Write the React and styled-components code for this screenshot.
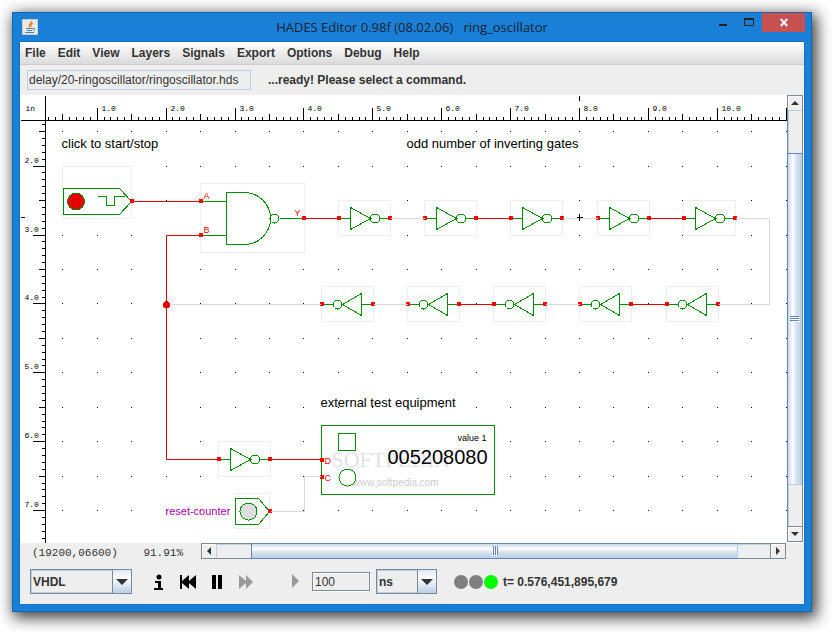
import React, { useState } from "react";
import styled, { createGlobalStyle } from "styled-components";

const GlobalStyle = createGlobalStyle`
  * {
    box-sizing: border-box;
  }
  body {
    margin: 0;
    background: #fff;
    color: #333;
    font-family: "Liberation Sans", Arial, sans-serif;
    font-size: 12px;
  }
`;

const Desktop = styled.div`
  display: flex;
  min-height: 100vh;
  padding: 12px 20px 20px 12px;
`;

const Window = styled.div`
  flex: 1;
  min-width: 0;
  display: flex;
  flex-direction: column;
  padding: 0 7px 7px;
  border: 1px solid #1465ad;
  background: #1a80d7;
  box-shadow: 3px 4px 14px 2px rgba(0, 0, 0, 0.75);
`;

const TitleBar = styled.header`
  display: grid;
  grid-template-columns: 84px 1fr 84px;
  height: 29px;
`;

const AppIcon = styled.svg`
  width: 16px;
  height: 16px;
  margin: 6px 2px;
`;

const Title = styled.h1`
  margin: 0;
  color: #16222e;
  font-family: "Open Sans", "Noto Sans", sans-serif;
  font-size: 13px;
  font-weight: 400;
  line-height: 29px;
  text-align: center;
  white-space: pre;
`;

const WindowButtons = styled.div`
  display: flex;
  justify-content: flex-end;
  height: 19px;
  margin-right: -1px;
`;

const WindowButton = styled.button`
  width: ${(props) => (props.$close ? "43px" : "26px")};
  height: 19px;
  flex-shrink: 0;
  padding: 0;
  border: none;
  background: ${(props) => (props.$close ? "#c75050" : "transparent")};
  svg {
    display: block;
    margin: 0 auto;
  }
`;

const Client = styled.div`
  flex: 1;
  display: flex;
  flex-direction: column;
  background: #eee;
  box-shadow: 0 0 0 1px #1570c0;
`;

const MenuBar = styled.nav`
  display: flex;
  gap: 12px;
  height: 23px;
  padding: 0 5px;
  border-bottom: 1px solid #ccc;
  background: linear-gradient(#fff, #dadada);
`;

const MenuItem = styled.button`
  padding: 0;
  border: none;
  background: none;
  color: #333;
  font: bold 12px/22px "Liberation Sans", Arial, sans-serif;
`;

const CommandBar = styled.div`
  display: flex;
  align-items: center;
  gap: 17px;
  height: 30px;
  padding: 0 7px;
`;

const PathField = styled.input`
  width: 224px;
  height: 20px;
  padding: 0 1px;
  border: 1px solid #b8cfe5;
  background: #eee;
  color: #333;
  font: 12px "Liberation Sans", Arial, sans-serif;
`;

const Message = styled.span`
  font-weight: bold;
`;

const WorkArea = styled.div`
  flex: 1;
  display: flex;
  background: #fff;
`;

const Sheet = styled.svg`
  flex: 1;
  min-width: 0;
  min-height: 448px;
  background: #fff;
  font-family: "Liberation Sans", Arial, sans-serif;
`;

const ScrollBar = styled.div`
  display: flex;
  flex-direction: ${(props) => (props.$vertical ? "column" : "row")};
  ${(props) => (props.$vertical ? "width: 16px; margin: 0 1px 1px 0;" : "flex: 1; height: 16px; margin-right: 18px;")}
  border: 1px solid #7a8a99;
  background: #eee;
`;

const ScrollArrow = styled.button`
  display: grid;
  place-items: center;
  width: 14px;
  height: 14px;
  padding: 0;
  border: none;
  background: #eee;
  box-shadow: inset 1px 1px #fff, 0 0 0 1px #7a8a99;
`;

const Track = styled.div`
  flex: ${(props) => props.$size};
  box-shadow: inset 1px 1px #b8cfe5;
`;

const Thumb = styled.div`
  flex: ${(props) => props.$size};
  display: grid;
  place-items: center;
  box-shadow: 0 0 0 1px #6382bf;
  background: linear-gradient(
    ${(props) => (props.$vertical ? "to right" : "to bottom")},
    #c8d9ea,
    #e6eef6 20%,
    #fff 32%,
    #dbe6f1 55%,
    #b8cfe5
  );
`;

const StatusRow = styled.div`
  display: flex;
  height: 16px;
`;

const Coordinates = styled.div`
  display: flex;
  justify-content: space-between;
  width: 181px;
  padding: 3px 18px 0 12px;
  font: 11px/14px "Liberation Mono", monospace;
  white-space: nowrap;
`;

const ControlBar = styled.div`
  display: flex;
  align-items: center;
  height: 45px;
  padding: 0 10px;
`;

const SelectBox = styled.div`
  position: relative;
  width: ${(props) => props.$width}px;
  height: 25px;
  border: 1px solid #7a8a99;
  background: #eee;
`;

const Select = styled.select`
  appearance: none;
  width: 100%;
  height: 100%;
  padding: 0 20px 0 1px;
  border: 1px solid #b8cfe5;
  border-radius: 0;
  background: transparent;
  color: #333;
  font: bold 12px "Liberation Sans", Arial, sans-serif;
`;

const SelectArrow = styled.span`
  position: absolute;
  top: 0;
  right: 0;
  display: grid;
  place-items: center;
  width: 19px;
  height: 23px;
  border-left: 1px solid #7a8a99;
  background: linear-gradient(#dde8f3, #fff 35%, #b8cfe5);
  pointer-events: none;
`;

const PlayerButtons = styled.div`
  display: flex;
  align-items: center;
  gap: 12px;
  margin: 0 8px 0 19px;
`;

const PlayerButton = styled.button`
  width: 17px;
  height: 18px;
  padding: 0;
  border: none;
  background: none;
  &:last-child {
    margin-left: 20px;
  }
  svg {
    display: block;
  }
`;

const StepField = styled.input`
  width: 58px;
  height: 19px;
  margin-right: 6px;
  padding: 0 2px;
  border: 1px solid #7a8a99;
  background: #eee;
  box-shadow: 1px 1px #fff, inset 1px 1px #fff;
  color: #333;
  font: 12px "Liberation Sans", Arial, sans-serif;
`;

const Lamps = styled.div`
  display: flex;
  gap: 1px;
  margin: 0 5px 0 17px;
`;

const Lamp = styled.span`
  width: 14px;
  height: 14px;
  border-radius: 50%;
  background: ${(props) => (props.$on ? "#0f0" : "#808080")};
`;

const GREEN = "#008c00";
const RED = "#e60000";
const GRAY = "#d9d9d9";

const MENUS = ["File", "Edit", "View", "Layers", "Signals", "Export", "Options", "Debug", "Help"];

// sheet position of the upper left corner of the view
const ORIGIN = { x: 20, y: 95 };

function toPixel(tenths) {
  return Math.floor(28.3 + tenths * 6.89);
}

function range(from, to) {
  return Array.from({ length: to - from }, (_, i) => from + i);
}

function tickLength(tenths) {
  if (tenths % 10 === 0) return 13;
  return tenths % 5 === 0 ? 7 : 4;
}

function Arrow({ direction, size = 8 }) {
  const shapes = {
    up: "M0 6 L4 2 L8 6 Z",
    down: "M0 2 L8 2 L4 6 Z",
    left: "M6 0 L6 8 L2 4 Z",
    right: "M2 0 L6 4 L2 8 Z",
  };
  return (
    <svg width={size} height={size} viewBox="0 0 8 8" aria-hidden="true">
      <path d={shapes[direction]} fill="#333" />
    </svg>
  );
}

function Grip({ vertical }) {
  return (
    <svg width="10" height="10" aria-hidden="true" shapeRendering="crispEdges">
      <g transform={vertical ? undefined : "rotate(90 5 5)"}>
        <path d="M1 3.5h9M1 5.5h9M1 7.5h9" stroke="#fff" />
        <path d="M0 2.5h9M0 4.5h9M0 6.5h9" stroke="#6382bf" />
      </g>
    </svg>
  );
}

function Rulers() {
  const ticks = range(3, 200);
  return (
    <>
      <path d="M20 120 H2000 M45 95 V2000 M579 95 V100 M20 217 H24" stroke="#000" />
      <path
        stroke="#000"
        d={ticks.map((t) => `M${toPixel(t)} 120 v-${tickLength(t)}`).join(" ")}
      />
      <path
        stroke="#000"
        d={ticks
          .filter((t) => t > 13)
          .map((t) => `M45 ${toPixel(t)} h-${tickLength(t)}`)
          .join(" ")}
      />
      <g fontFamily="Liberation Mono, monospace" fontSize="8" fill="#000">
        <text x="25" y="110">in</text>
        {range(1, 11).map((n) => (
          <text key={n} x={toPixel(n * 10) + 4} y="110">{n}.0</text>
        ))}
        {range(2, 8).map((n) => (
          <text key={n} x="24" y={toPixel(n * 10) - 4}>{n}.0</text>
        ))}
      </g>
    </>
  );
}

function GridDots() {
  const d = range(1, 40)
    .flatMap((col) => range(3, 40).map((row) => `M${toPixel(col * 5) - 0.5} ${toPixel(row * 5)}h1`))
    .join("");
  return <path d={d} stroke="#000" />;
}

function Pin({ x, y }) {
  return <rect x={x - 1.5} y={y - 2.5} width="4" height="4" fill="#f00" stroke="none" />;
}

function Bounds({ x, y, w, h }) {
  return <rect x={x} y={y} width={w} height={h} fill="#fff" stroke="#eee" />;
}

function Inverter({ x, y }) {
  return (
    <g fill="none" stroke={GREEN}>
      <Bounds x={x} y={y - 18} w={52} h={35} />
      <path d={`M${x} ${y} h12 M${x + 12} ${y - 12} v23 M${x + 12} ${y - 11} L${x + 32} ${y} L${x + 12} ${y + 11} M${x + 41} ${y} h10`} />
      <circle cx={x + 36.5} cy={y} r="4.5" />
      <Pin x={x} y={y} />
      <Pin x={x + 51} y={y} />
    </g>
  );
}

function InverterLeft({ x, y }) {
  return (
    <g fill="none" stroke={GREEN}>
      <Bounds x={x} y={y - 18} w={52} h={35} />
      <path d={`M${x} ${y} h12 M${x + 40} ${y - 12} v23 M${x + 40} ${y - 11} L${x + 21} ${y} L${x + 40} ${y + 11} M${x + 40} ${y} h11`} />
      <circle cx={x + 16} cy={y} r="4.5" />
      <Pin x={x} y={y} />
      <Pin x={x + 51} y={y} />
    </g>
  );
}

function NandGate() {
  return (
    <g fill="none" stroke={GREEN}>
      <Bounds x={200} y={183} w={104} h={69} />
      <path d="M200 201 H226 M200 235 H226 M226 192 V244 H244 A26 26 0 0 0 244 192 Z M279 218 H304" />
      <circle cx="274" cy="218" r="4.5" />
      <Pin x={200} y={201} />
      <Pin x={200} y={235} />
      <Pin x={303} y={218} />
      <g fill="#f00" stroke="none" fontSize="9">
        <text x="203" y="198">A</text>
        <text x="203" y="232">B</text>
        <text x="294" y="215">Y</text>
      </g>
    </g>
  );
}

function PulseSwitch() {
  return (
    <g fill="none" stroke={GREEN}>
      <Bounds x={62} y={166} w={69} h={52} />
      <path d="M119 188 H63 V214 H119 L131 201 Z M97 196 H106 V205 H114 V196 H124" />
      <circle cx="75.5" cy="201" r="8.5" fill={RED} />
      <Pin x={131} y={201} />
    </g>
  );
}

function ResetSwitch() {
  return (
    <g fill="none" stroke={GREEN}>
      <Bounds x={235} y={493} w={34} h={35} />
      <path d="M258 498 H235 V524 H258 L269 511 Z" />
      <circle cx="248" cy="511" r="8.5" fill="#ddd" />
      <Pin x={269} y={511} />
    </g>
  );
}

function Counter() {
  return (
    <g fill="none" stroke={GREEN}>
      <rect x="321" y="425" width="173" height="69" fill="#fff" />
      <g stroke="none">
        <text x="331" y="466" fontFamily="Liberation Serif, serif" fontSize="22" fill="#e2e2e2">SOFTPEDIA</text>
        <text x="454" y="452" fontSize="7" fill="#ddd">™</text>
        <text x="352" y="485" fontSize="10" fill="#ccc">www.softpedia.com</text>
      </g>
      <rect x="338" y="433" width="17" height="17" />
      <circle cx="347" cy="477" r="8.5" fill="#fff" />
      <Pin x={321} y={460} />
      <Pin x={321} y={477} />
      <g fill="#f00" stroke="none" fontSize="9">
        <text x="324" y="463">D</text>
        <text x="324" y="480">C</text>
      </g>
      <g fill="#000" stroke="none" textAnchor="end">
        <text x="486" y="440" fontSize="9">value 1</text>
        <text x="487" y="463" fontSize="20">005208080</text>
      </g>
    </g>
  );
}

function Schematic() {
  return (
    <Sheet role="img" aria-label="ring_oscillator schematic">
      <g transform={`translate(${0.5 - ORIGIN.x} ${0.5 - ORIGIN.y})`} shapeRendering="crispEdges">
        <GridDots />
        <rect x="19.5" y="94.5" width="25" height="2000" fill="#fff" />
        <Rulers />
        <PulseSwitch />
        <NandGate />
        {[338, 424, 510, 597, 683].map((x) => (
          <Inverter key={x} x={x} y={218} />
        ))}
        {[321, 407, 493, 579, 666].map((x) => (
          <InverterLeft key={x} x={x} y={304} />
        ))}
        <Inverter x={218} y={459} />
        <ResetSwitch />
        <Counter />
        <g fill="none" stroke={RED}>
          <path d="M133 201 H199 M199 235 H166 V459 H216 M271 459 H320" />
          <path d="M305 218 H338 M476 218 H510 M649 218 H683 M459 304 H493 M631 304 H666" />
          <circle cx="166" cy="304" r="3" fill={RED} />
        </g>
        <path
          fill="none"
          stroke={GRAY}
          d="M390 218 H424 M562 218 H597 M735 218 H769 V304 H718 M373 304 H407 M545 304 H579 M170 304 H320 M270 511 H304 V476 H320"
        />
        <path d="M576 217 H582 M579 213.5 V220.5" stroke="#000" />
        <g fill="#000" fontSize="13">
          <text x="61" y="147">click to start/stop</text>
          <text x="406" y="147">odd number of inverting gates</text>
          <text x="320" y="406">external test equipment</text>
        </g>
        <text x="165" y="514" fontSize="11" fill="#a0a">reset-counter</text>
      </g>
    </Sheet>
  );
}

export default function App() {
  const [language, setLanguage] = useState("VHDL");
  const [unit, setUnit] = useState("ns");
  const [step, setStep] = useState("100");

  return (
    <Desktop>
      <GlobalStyle />
      <Window>
        <TitleBar>
          <AppIcon viewBox="0 0 16 16" aria-hidden="true">
            <rect width="16" height="16" rx="1" fill="#e9e9e9" stroke="#b9b0a8" />
            <path d="M9.500 2 C10 4.500 5.500 5 8 8.500 M11 4.500 C8.500 5 8.500 6 9.500 7.500" fill="none" stroke="#e8802a" strokeWidth="1.300" />
            <path d="M4 9.500 H11 M5 11.500 H10 M3 13.500 H12 M11 9.500 C14 9 13 11.500 11 11.500" fill="none" stroke="#53809f" />
          </AppIcon>
          <Title>{"HADES Editor 0.98f (08.02.06)   ring_oscillator"}</Title>
          <WindowButtons>
            <WindowButton aria-label="Minimize">
              <svg width="10" height="19"><path d="M1 12h8" stroke="#222" strokeWidth="2" /></svg>
            </WindowButton>
            <WindowButton aria-label="Maximize">
              <svg width="10" height="19"><path d="M.5 5V12.500H9.500V5" fill="none" stroke="#222" /><path d="M0 6h10" stroke="#222" strokeWidth="2" /></svg>
            </WindowButton>
            <WindowButton $close aria-label="Close">
              <svg width="8" height="19"><path d="M.7 6l6.600 7M7.300 6l-6.600 7" stroke="#fff" strokeWidth="2" /></svg>
            </WindowButton>
          </WindowButtons>
        </TitleBar>
        <Client>
          <MenuBar>
            {MENUS.map((name) => (
              <MenuItem key={name}>{name}</MenuItem>
            ))}
          </MenuBar>
          <CommandBar>
            <PathField aria-label="Design file" readOnly value="delay/20-ringoscillator/ringoscillator.hds" />
            <Message>...ready! Please select a command.</Message>
          </CommandBar>
          <WorkArea>
            <Schematic />
            <ScrollBar $vertical>
              <ScrollArrow aria-label="Scroll up"><Arrow direction="up" /></ScrollArrow>
              <Track $size={44} />
              <Thumb $vertical $size={330}><Grip vertical /></Thumb>
              <Track $size={43} />
              <ScrollArrow aria-label="Scroll down"><Arrow direction="down" /></ScrollArrow>
            </ScrollBar>
          </WorkArea>
          <StatusRow>
            <Coordinates>
              <span>(19200,06600)</span>
              <span>91.91%</span>
            </Coordinates>
            <ScrollBar>
              <ScrollArrow aria-label="Scroll left"><Arrow direction="left" /></ScrollArrow>
              <Track $size={36} />
              <Thumb $size={485}><Grip /></Thumb>
              <Track $size={34} />
              <ScrollArrow aria-label="Scroll right"><Arrow direction="right" /></ScrollArrow>
            </ScrollBar>
          </StatusRow>
          <ControlBar>
            <SelectBox $width={102}>
              <Select aria-label="Language" value={language} onChange={(ev) => setLanguage(ev.target.value)}>
                <option>VHDL</option>
                <option>Verilog</option>
              </Select>
              <SelectArrow><Arrow direction="down" size={12} /></SelectArrow>
            </SelectBox>
            <PlayerButtons>
              <PlayerButton aria-label="Info">
                <svg width="17" height="18"><circle cx="8" cy="4" r="2.500" /><path d="M4 8h6v7h2v2H3v-2h4v-5H4z" /></svg>
              </PlayerButton>
              <PlayerButton aria-label="Rewind">
                <svg width="17" height="18"><path d="M0 2h2v6l7-6v6l7-6v14l-7-6v6l-7-6v6H0z" /></svg>
              </PlayerButton>
              <PlayerButton aria-label="Pause">
                <svg width="17" height="18"><path d="M3 2h4v14H3zM9 2h4v14H9z" /></svg>
              </PlayerButton>
              <PlayerButton aria-label="Fast forward">
                <svg width="17" height="18"><path d="M1 2l7 6V2l7 7-7 7v-6l-7 6z" fill="#999" /></svg>
              </PlayerButton>
              <PlayerButton aria-label="Step">
                <svg width="17" height="18"><path d="M5 1l7 7-7 7z" fill="#999" /></svg>
              </PlayerButton>
            </PlayerButtons>
            <StepField aria-label="Step time" value={step} onChange={(ev) => setStep(ev.target.value)} />
            <SelectBox $width={61}>
              <Select aria-label="Time unit" value={unit} onChange={(ev) => setUnit(ev.target.value)}>
                <option>ps</option>
                <option>ns</option>
                <option>us</option>
              </Select>
              <SelectArrow><Arrow direction="down" size={12} /></SelectArrow>
            </SelectBox>
            <Lamps>
              <Lamp />
              <Lamp />
              <Lamp $on />
            </Lamps>
            <Message>t= 0.576,451,895,679</Message>
          </ControlBar>
        </Client>
      </Window>
    </Desktop>
  );
}
